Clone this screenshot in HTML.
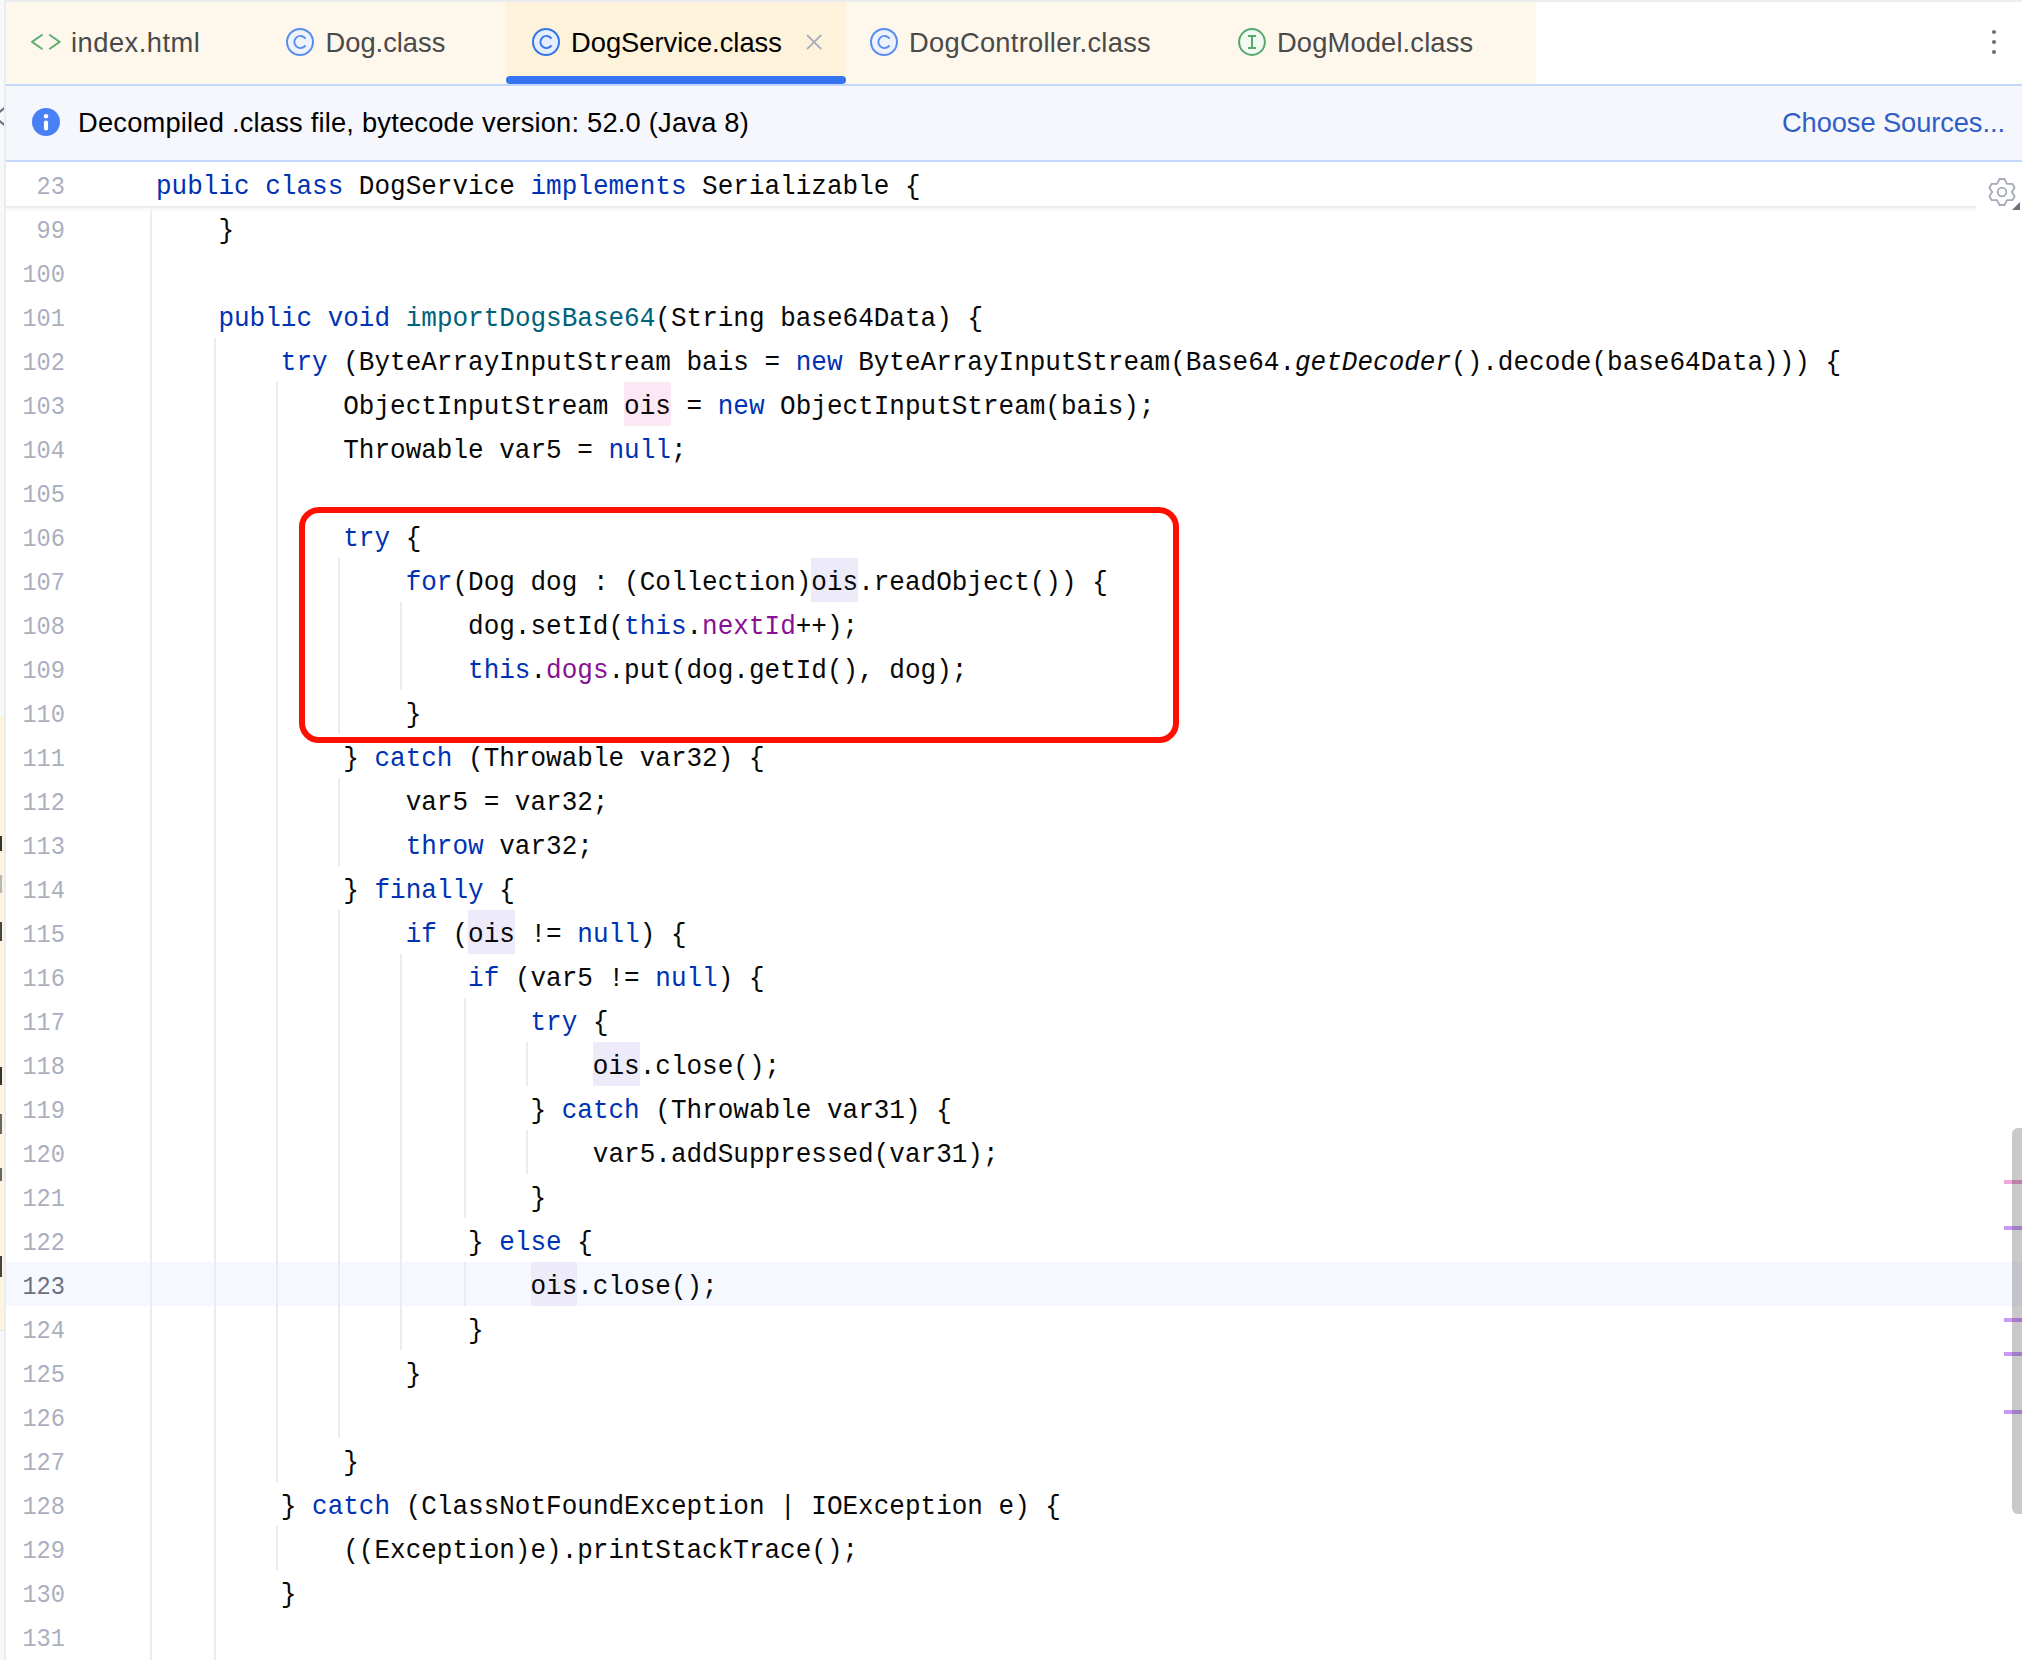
<!DOCTYPE html>
<html><head><meta charset="utf-8">
<style>
*{margin:0;padding:0;box-sizing:border-box;}
html,body{width:2022px;height:1660px;overflow:hidden;background:#fff;}
body{position:relative;font-family:"Liberation Sans",sans-serif;}
div,span{position:absolute;}
.code span,.ln span,.txt span{position:static;}
.topstrip{left:0;top:0;width:2022px;height:2px;background:#ebecf0;}
.leftpanel{left:0;top:0;width:4px;height:1660px;background:#f7f8fa;}
.leftsep{left:4px;top:0;width:2px;height:1660px;background:#ebecf0;}
.tabbar{left:6px;top:2px;width:1530px;height:82px;background:#fef8ec;}
.tabactive{left:506px;top:2px;width:340px;height:82px;background:#fdf3da;}
.tabline{left:506px;top:76px;width:340px;height:8px;background:#3574f0;border-radius:4px;}
.bline1{left:6px;top:84px;width:2016px;height:2px;background:#c3d6fb;}
.banner{left:6px;top:86px;width:2016px;height:74px;background:#f5f7fd;}
.bline2{left:6px;top:160px;width:2016px;height:2px;background:#c3d6fb;}
.txt{white-space:pre;line-height:1;}
.tab{color:#4a4a4a;}
.code{white-space:pre;line-height:44px;height:44px;color:#080808;font-family:"Liberation Mono",monospace;transform-origin:0 0;}
.k{color:#0033b3;}
.f{color:#871094;}
.m{color:#00627a;}
.it{font-style:italic;}
.ln{left:0;width:65px;text-align:right;white-space:pre;line-height:44px;height:44px;color:#abb0bf;font-family:"Liberation Mono",monospace;transform-origin:100% 0;}
.ln.cl{color:#6c707e;}
.cur{left:6px;width:2016px;height:44px;background:#f5f8fe;}
.hl{height:44px;}
.g{width:2px;background:#ebecf0;}
.sticky{left:6px;top:162px;width:2016px;height:44px;background:#fff;}
.stickyb{left:6px;top:206px;width:1970px;height:2px;background:#ebecf0;}
.stickysh{left:6px;top:208px;width:1970px;height:5px;background:linear-gradient(#f7f8fa,rgba(255,255,255,0));}
.redbox{left:299px;top:507px;width:880px;height:236px;border:6px solid #fe1000;border-radius:20px;}
.scroll{left:2012px;top:1128px;width:10px;height:386px;background:rgba(0,0,0,0.21);border-radius:6px 0 0 6px;}
.mk{left:2004px;width:18px;height:4px;}

.code{left:156.1px;font-size:28.5px;transform:scaleX(0.91228);}
.ln{font-size:25.5px;transform:scaleX(0.92810);}
.ui{font-size:27.3px;}

</style></head><body>
<div class="topstrip"></div>
<div class="tabbar"></div>
<div class="tabactive"></div>
<div class="tabline"></div>
<div class="bline1"></div>
<div class="banner"></div>
<div class="bline2"></div>
<div class="txt ui tab" style="left:71px;top:28.5px;letter-spacing:0.5px">index.html</div>
<div class="txt ui tab" style="left:325.5px;top:28.5px">Dog.class</div>
<div class="txt ui" style="left:571px;top:28.5px;color:#000">DogService.class</div>
<div class="txt ui tab" style="left:909px;top:28.5px;letter-spacing:0.28px">DogController.class</div>
<div class="txt ui tab" style="left:1277px;top:28.5px;letter-spacing:0.15px">DogModel.class</div>
<svg style="position:absolute;left:0;top:0" width="2022" height="220" viewBox="0 0 2022 220">
  <g fill="none" stroke="#5fae73" stroke-width="2.0" stroke-linecap="round" stroke-linejoin="round">
    <polyline points="41.9,35 32,41.9 41.9,48.8"/>
    <polyline points="49.8,35 59.7,41.9 49.8,48.8"/>
  </g>
  <g stroke-width="2">
    <circle cx="300" cy="42" r="13" fill="#edf2fb" stroke="#5b8df0"/>
    <circle cx="546" cy="42" r="13" fill="#e6eefd" stroke="#3574f0"/>
    <circle cx="884" cy="42" r="13" fill="#edf2fb" stroke="#5b8df0"/>
  </g>
  <g fill="none" stroke-width="1.9">
    <path stroke="#5b8df0" d="M305.5,38.6 A6.1,6.1 0 1 0 305.5,45.4"/>
    <path stroke="#3574f0" d="M551.5,38.6 A6.1,6.1 0 1 0 551.5,45.4"/>
    <path stroke="#5b8df0" d="M889.5,38.6 A6.1,6.1 0 1 0 889.5,45.4"/>
  </g>
  <circle cx="1252" cy="42" r="12.9" fill="#f2f9f0" stroke="#55a86b" stroke-width="2"/>
  <g fill="none" stroke="#55a86b" stroke-width="2">
    <path d="M1248,36 H1256 M1252,36 V48 M1248,48 H1256"/>
  </g>
  <g stroke="#a8adbd" stroke-width="1.8" stroke-linecap="butt">
    <path d="M807,35 L821.2,49.2 M821.2,35 L807,49.2"/>
  </g>
  <g fill="#6c707e">
    <circle cx="1994" cy="32" r="2.1"/><circle cx="1994" cy="42" r="2.1"/><circle cx="1994" cy="52" r="2.1"/>
  </g>
  <circle cx="46" cy="122" r="14" fill="#4a80f5"/>
  <circle cx="46" cy="116.2" r="2.2" fill="#fff"/>
  <path d="M46,122.5 V128.5" stroke="#fff" stroke-width="4.2" stroke-linecap="round"/>
</svg>
<div class="txt ui" style="left:78px;top:108.5px;color:#000;letter-spacing:0.2px">Decompiled .class file, bytecode version: 52.0 (Java 8)</div>
<div class="txt ui" style="left:1782px;top:108.5px;color:#2f5fc6;letter-spacing:-0.1px">Choose Sources...</div>

<div class="cur" style="top:1262px"></div>
<div class="hl" style="left:624.1px;top:382px;width:46.8px;background:#fbe8f4"></div>
<div class="hl" style="left:811.3px;top:558px;width:46.8px;background:#edeafa"></div>
<div class="hl" style="left:468.1px;top:910px;width:46.8px;background:#edeafa"></div>
<div class="hl" style="left:592.9px;top:1042px;width:46.8px;background:#edeafa"></div>
<div class="hl" style="left:530.5px;top:1262px;width:46.8px;background:#edeafa"></div>
<div class="g" style="left:150px;top:208px;height:1452px"></div>
<div class="g" style="left:214px;top:338px;height:1322px"></div>
<div class="g" style="left:276px;top:382px;height:1100px"></div>
<div class="g" style="left:276px;top:1526px;height:44px"></div>
<div class="g" style="left:338px;top:558px;height:176px"></div>
<div class="g" style="left:338px;top:778px;height:88px"></div>
<div class="g" style="left:338px;top:910px;height:528px"></div>
<div class="g" style="left:400px;top:602px;height:88px"></div>
<div class="g" style="left:400px;top:954px;height:396px"></div>
<div class="g" style="left:464px;top:998px;height:220px"></div>
<div class="g" style="left:464px;top:1262px;height:44px"></div>
<div class="g" style="left:526px;top:1042px;height:44px"></div>
<div class="g" style="left:526px;top:1130px;height:44px"></div>
<div class="ln" style="top:209.5px">99</div>
<div class="code" style="top:209px">    }</div>
<div class="ln" style="top:253.5px">100</div>
<div class="ln" style="top:297.5px">101</div>
<div class="code" style="top:297px">    <span class="k">public</span> <span class="k">void</span> <span class="m">importDogsBase64</span>(String base64Data) {</div>
<div class="ln" style="top:341.5px">102</div>
<div class="code" style="top:341px">        <span class="k">try</span> (ByteArrayInputStream bais = <span class="k">new</span> ByteArrayInputStream(Base64.<span class="it">getDecoder</span>().decode(base64Data))) {</div>
<div class="ln" style="top:385.5px">103</div>
<div class="code" style="top:385px">            ObjectInputStream ois = <span class="k">new</span> ObjectInputStream(bais);</div>
<div class="ln" style="top:429.5px">104</div>
<div class="code" style="top:429px">            Throwable var5 = <span class="k">null</span>;</div>
<div class="ln" style="top:473.5px">105</div>
<div class="ln" style="top:517.5px">106</div>
<div class="code" style="top:517px">            <span class="k">try</span> {</div>
<div class="ln" style="top:561.5px">107</div>
<div class="code" style="top:561px">                <span class="k">for</span>(Dog dog : (Collection)ois.readObject()) {</div>
<div class="ln" style="top:605.5px">108</div>
<div class="code" style="top:605px">                    dog.setId(<span class="k">this</span>.<span class="f">nextId</span>++);</div>
<div class="ln" style="top:649.5px">109</div>
<div class="code" style="top:649px">                    <span class="k">this</span>.<span class="f">dogs</span>.put(dog.getId(), dog);</div>
<div class="ln" style="top:693.5px">110</div>
<div class="code" style="top:693px">                }</div>
<div class="ln" style="top:737.5px">111</div>
<div class="code" style="top:737px">            } <span class="k">catch</span> (Throwable var32) {</div>
<div class="ln" style="top:781.5px">112</div>
<div class="code" style="top:781px">                var5 = var32;</div>
<div class="ln" style="top:825.5px">113</div>
<div class="code" style="top:825px">                <span class="k">throw</span> var32;</div>
<div class="ln" style="top:869.5px">114</div>
<div class="code" style="top:869px">            } <span class="k">finally</span> {</div>
<div class="ln" style="top:913.5px">115</div>
<div class="code" style="top:913px">                <span class="k">if</span> (ois != <span class="k">null</span>) {</div>
<div class="ln" style="top:957.5px">116</div>
<div class="code" style="top:957px">                    <span class="k">if</span> (var5 != <span class="k">null</span>) {</div>
<div class="ln" style="top:1001.5px">117</div>
<div class="code" style="top:1001px">                        <span class="k">try</span> {</div>
<div class="ln" style="top:1045.5px">118</div>
<div class="code" style="top:1045px">                            ois.close();</div>
<div class="ln" style="top:1089.5px">119</div>
<div class="code" style="top:1089px">                        } <span class="k">catch</span> (Throwable var31) {</div>
<div class="ln" style="top:1133.5px">120</div>
<div class="code" style="top:1133px">                            var5.addSuppressed(var31);</div>
<div class="ln" style="top:1177.5px">121</div>
<div class="code" style="top:1177px">                        }</div>
<div class="ln" style="top:1221.5px">122</div>
<div class="code" style="top:1221px">                    } <span class="k">else</span> {</div>
<div class="ln cl" style="top:1265.5px">123</div>
<div class="code" style="top:1265px">                        ois.close();</div>
<div class="ln" style="top:1309.5px">124</div>
<div class="code" style="top:1309px">                    }</div>
<div class="ln" style="top:1353.5px">125</div>
<div class="code" style="top:1353px">                }</div>
<div class="ln" style="top:1397.5px">126</div>
<div class="ln" style="top:1441.5px">127</div>
<div class="code" style="top:1441px">            }</div>
<div class="ln" style="top:1485.5px">128</div>
<div class="code" style="top:1485px">        } <span class="k">catch</span> (ClassNotFoundException | IOException e) {</div>
<div class="ln" style="top:1529.5px">129</div>
<div class="code" style="top:1529px">            ((Exception)e).printStackTrace();</div>
<div class="ln" style="top:1573.5px">130</div>
<div class="code" style="top:1573px">        }</div>
<div class="ln" style="top:1617.5px">131</div>
<div class="sticky"></div>
<div class="stickyb"></div>
<div class="stickysh"></div>
<div class="code" style="top:165px"><span class="k">public</span> <span class="k">class</span> DogService <span class="k">implements</span> Serializable {</div><div class="ln" style="top:165.5px">23</div>

<svg style="position:absolute;left:1980px;top:170px" width="42" height="44" viewBox="1980 170 42 44">
  <path fill="none" stroke="#a4a9b8" stroke-width="1.8" stroke-linejoin="round"
   d="M1999.5,179 L2004.5,179 L2007,183.8 L2012.3,183.8 L2014.6,187.7 L2011.8,192 L2014.6,196.3 L2012.3,200.2 L2007,200.2 L2004.5,205 L1999.5,205 L1997,200.2 L1991.7,200.2 L1989.4,196.3 L1992.2,192 L1989.4,187.7 L1991.7,183.8 L1997,183.8 Z"/>
  <circle cx="2002" cy="192" r="4.3" fill="none" stroke="#a4a9b8" stroke-width="1.8"/>
  <path d="M2020,202 L2020,210 L2012,210 Z" fill="#6c707e"/>
</svg>
<div class="redbox"></div>
<div class="scroll"></div>
<div class="leftpanel"></div>
<div class="leftsep"></div>
<svg style="position:absolute;left:0;top:100px" width="4" height="30" viewBox="0 100 4 30"><polyline points="5,107.6 -6,116.6 5,125.4" fill="none" stroke="#6c707e" stroke-width="2.2"/></svg>
<div class="mk" style="top:1180px;background:#f0a8d8"></div><div class="mk" style="top:1180px;left:2012px;width:10px;background:#ba80a6"></div>
<div class="mk" style="top:1226px;background:#c99af7"></div><div class="mk" style="top:1226px;left:2012px;width:10px;background:#a27cc9"></div>
<div class="mk" style="top:1318px;background:#c99af7"></div><div class="mk" style="top:1318px;left:2012px;width:10px;background:#a27cc9"></div>
<div class="mk" style="top:1352px;background:#c99af7"></div><div class="mk" style="top:1352px;left:2012px;width:10px;background:#a27cc9"></div>
<div class="mk" style="top:1410px;background:#c99af7"></div><div class="mk" style="top:1410px;left:2012px;width:10px;background:#a27cc9"></div>
<div style="left:0;top:716px;width:4px;height:614px;background:#fef4dc"></div>
<div style="left:0;top:1330px;width:4px;height:1px;background:#e6e7eb"></div>
<div style="left:0;top:836px;width:2px;height:15px;background:#333"></div>
<div style="left:0;top:875px;width:1.5px;height:18px;background:#b8b8b8"></div>
<div style="left:0;top:922px;width:2px;height:19px;background:#444"></div>
<div style="left:0;top:1067px;width:2px;height:18px;background:#333"></div>
<div style="left:0;top:1114px;width:1.5px;height:20px;background:#666"></div>
<div style="left:0;top:1168px;width:1.5px;height:13px;background:#666"></div>
<div style="left:0;top:1256px;width:2px;height:21px;background:#444"></div>

</body></html>
